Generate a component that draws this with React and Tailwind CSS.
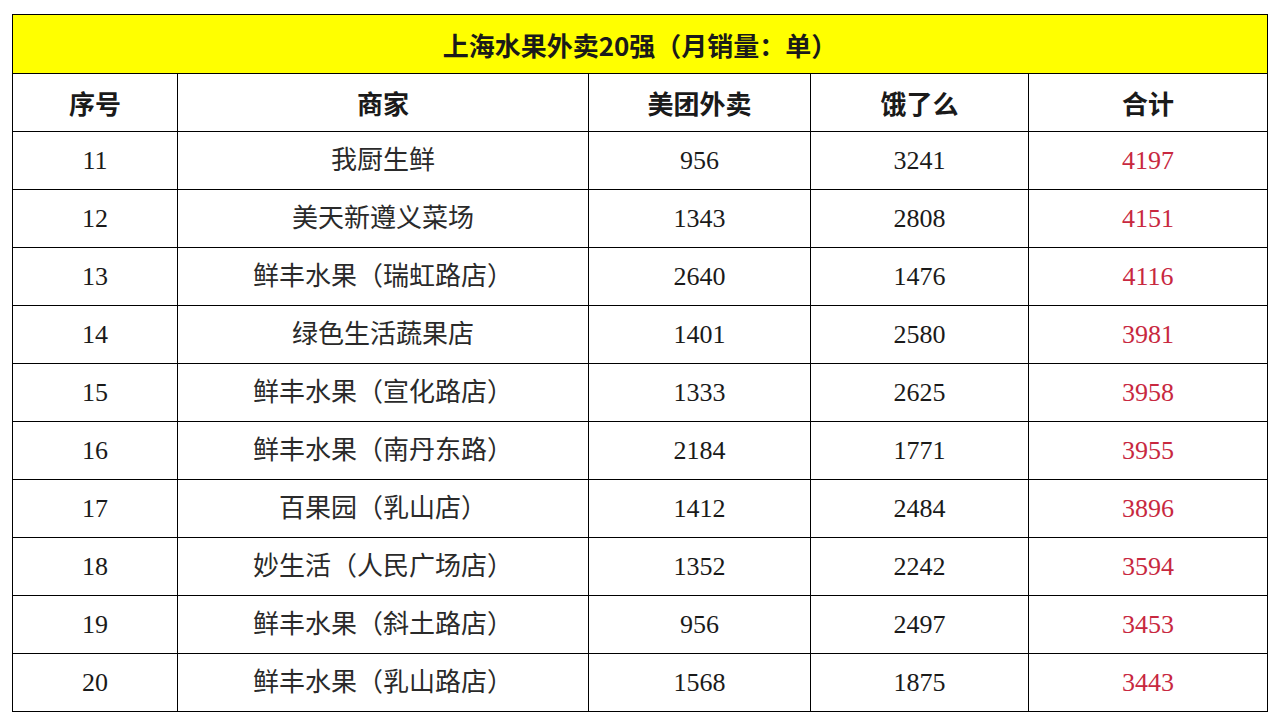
import React from 'react'

const rows = [
    { no: 11, name: '我厨生鲜', mt: 956, elm: 3241, total: 4197 },
    { no: 12, name: '美天新遵义菜场', mt: 1343, elm: 2808, total: 4151 },
    { no: 13, name: '鲜丰水果（瑞虹路店）', mt: 2640, elm: 1476, total: 4116 },
    { no: 14, name: '绿色生活蔬果店', mt: 1401, elm: 2580, total: 3981 },
    { no: 15, name: '鲜丰水果（宣化路店）', mt: 1333, elm: 2625, total: 3958 },
    { no: 16, name: '鲜丰水果（南丹东路）', mt: 2184, elm: 1771, total: 3955 },
    { no: 17, name: '百果园（乳山店）', mt: 1412, elm: 2484, total: 3896 },
    { no: 18, name: '妙生活（人民广场店）', mt: 1352, elm: 2242, total: 3594 },
    { no: 19, name: '鲜丰水果（斜土路店）', mt: 956, elm: 2497, total: 3453 },
    { no: 20, name: '鲜丰水果（乳山路店）', mt: 1568, elm: 1875, total: 3443 },
]

const headers = ['序号', '商家', '美团外卖', '饿了么', '合计']

export default function App() {
    return (
        <div className="w-[1280px] h-[720px] bg-white pt-[14px] pl-[12px]">
            <table
                className="table-fixed border-collapse text-[26px] text-[#1a1a1a]"
                style={{ fontFamily: '"Liberation Serif", "Noto Sans CJK SC", serif' }}
            >
                <colgroup>
                    <col className="w-[165px]" />
                    <col className="w-[411px]" />
                    <col className="w-[222px]" />
                    <col className="w-[218px]" />
                    <col className="w-[239px]" />
                </colgroup>
                <thead>
                    <tr className="h-[59px]">
                        <th
                            colSpan={5}
                            className="border border-black bg-[#ffff00] text-center font-bold p-0"
                            style={{ fontFamily: '"Noto Sans CJK SC", sans-serif' }}
                        >
                            上海水果外卖20强（月销量：单）
                        </th>
                    </tr>
                    <tr className="h-[58px]">
                        {headers.map((h, i) => (
                            <th
                                key={i}
                                className="border border-black text-center font-bold p-0"
                                style={{ fontFamily: '"Noto Sans CJK SC", sans-serif' }}
                            >
                                {h}
                            </th>
                        ))}
                    </tr>
                </thead>
                <tbody>
                    {rows.map((r) => (
                        <tr key={r.no} className="h-[58px]">
                            <td className="border border-black text-center p-0">{r.no}</td>
                            <td className="border border-black text-center p-0 text-[#2a2a2a]">{r.name}</td>
                            <td className="border border-black text-center p-0">{r.mt}</td>
                            <td className="border border-black text-center p-0">{r.elm}</td>
                            <td className="border border-black text-center p-0 text-[#c8283f]">{r.total}</td>
                        </tr>
                    ))}
                </tbody>
            </table>
        </div>
    )
}
